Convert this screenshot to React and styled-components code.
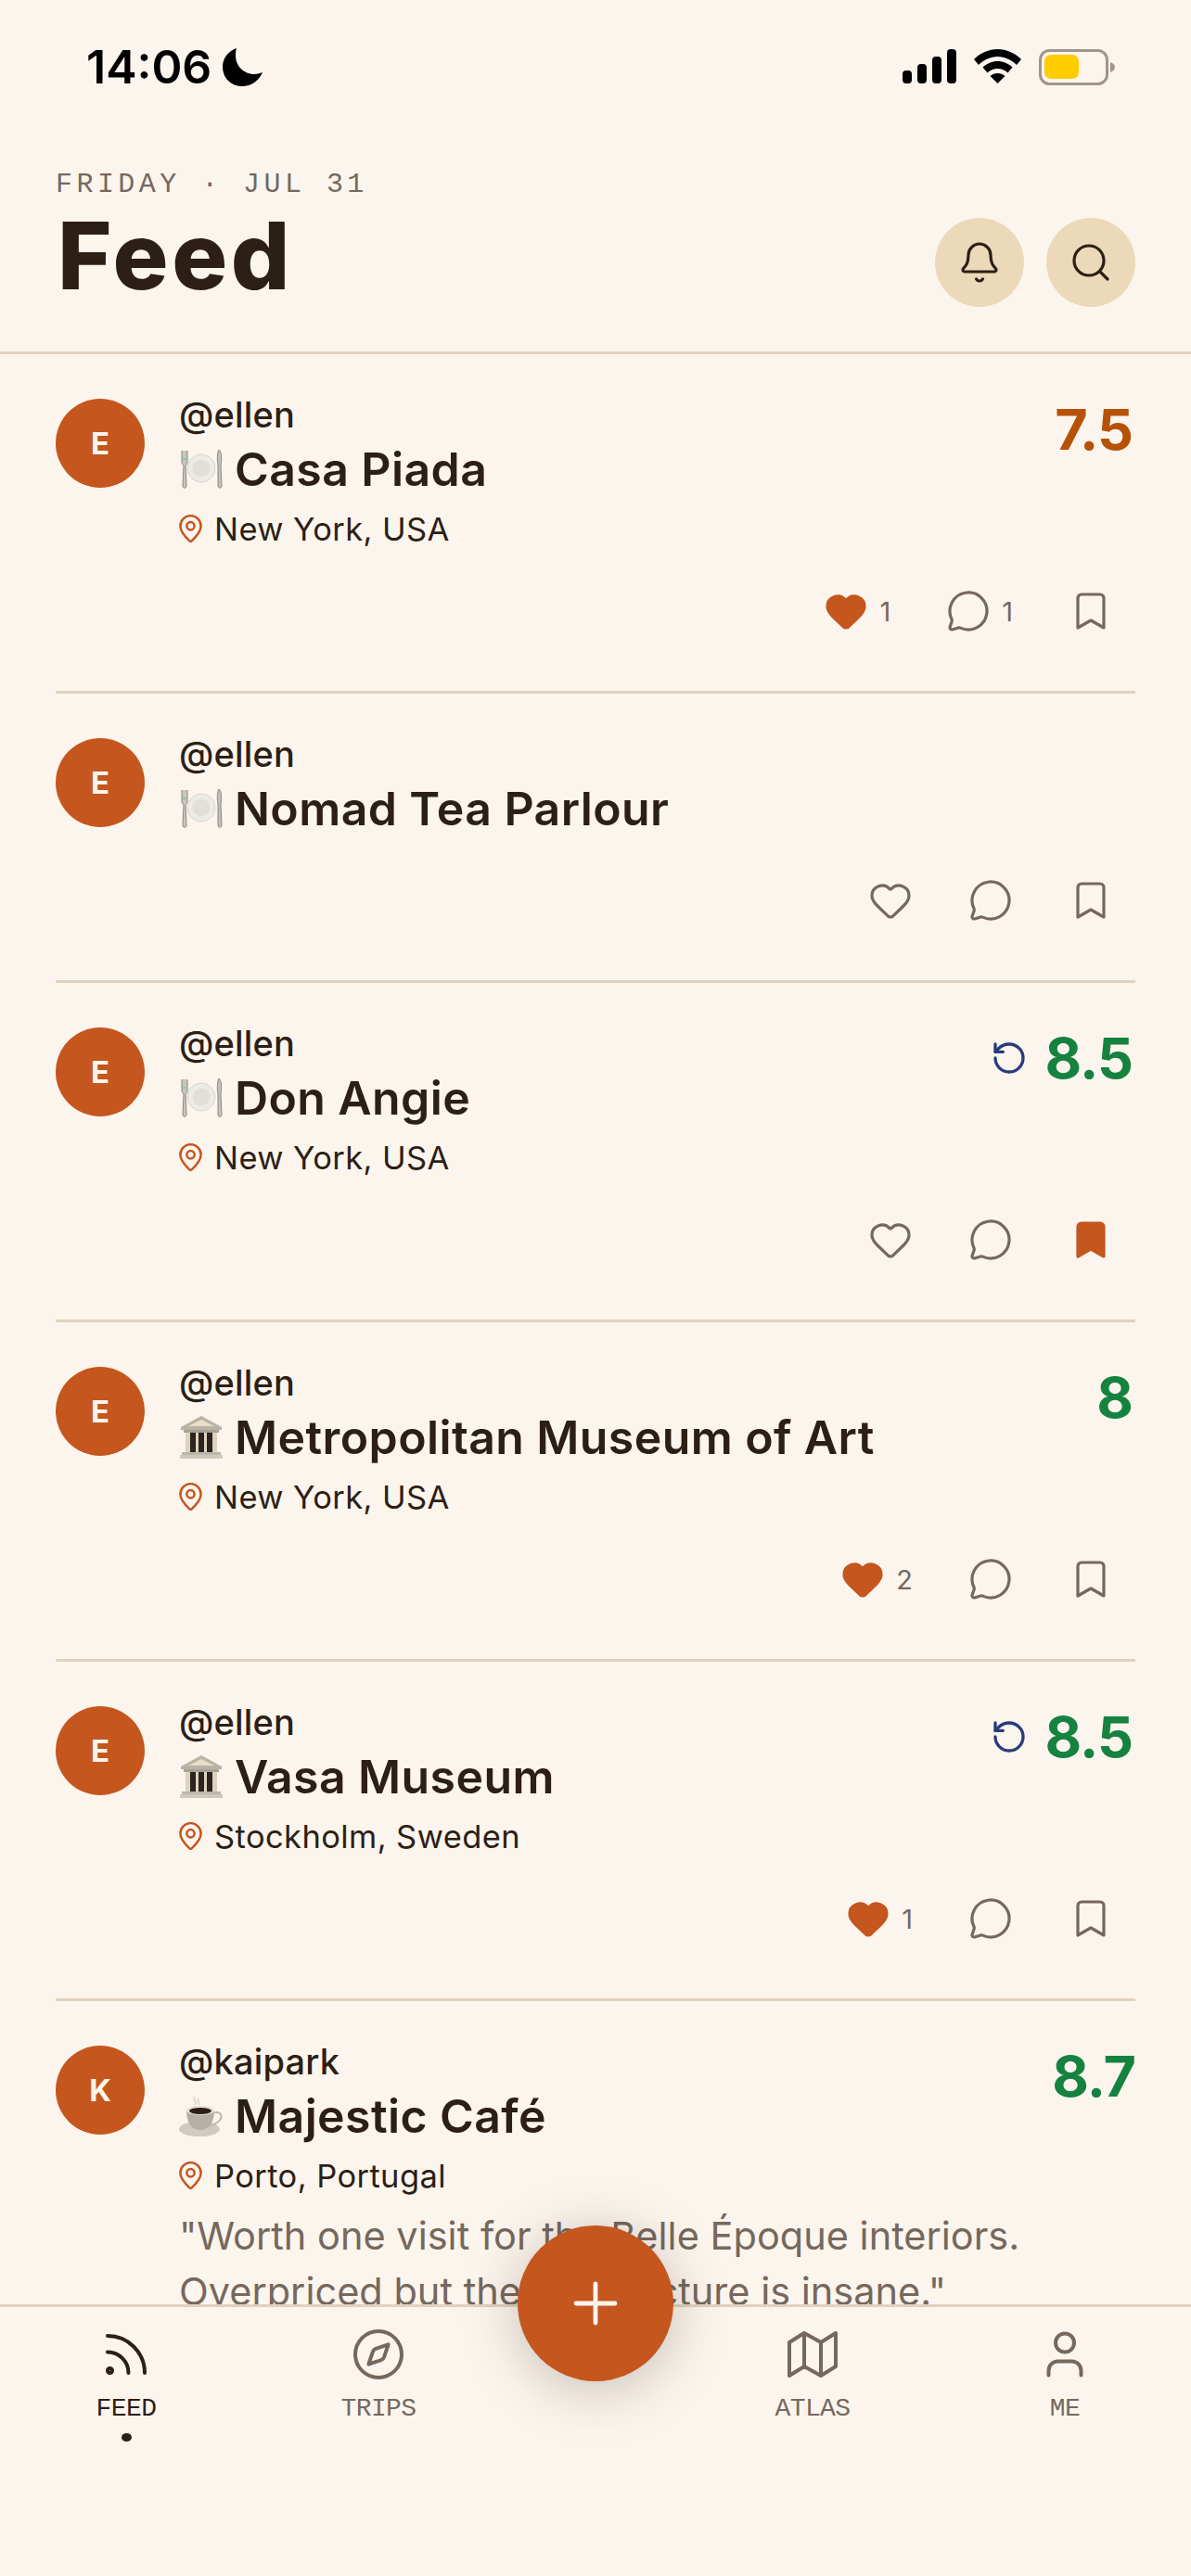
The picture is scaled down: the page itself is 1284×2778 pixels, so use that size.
import React from 'react'
import styled, { createGlobalStyle } from 'styled-components'
import { Bell, Search, Heart, MessageCircle, Bookmark, RotateCcw, Rss, Compass, User, Plus } from 'lucide-react'

const sans = '"Inter", "Liberation Sans", sans-serif'
const mono = '"Liberation Mono", "DejaVu Sans Mono", monospace'

const GlobalStyle = createGlobalStyle`
  html, body {
    margin: 0;
    padding: 0;
    background: #fcf5ee;
  }
  * {
    box-sizing: border-box;
  }
`

const Screen = styled.div`
  width: 1284px;
  height: 2778px;
  display: flex;
  flex-direction: column;
  overflow: hidden;
  background: #fcf5ee;
  color: #2c1f15;
  font-family: ${sans};
`

const StatusBar = styled.div`
  height: 130px;
  flex: none;
  padding: 46px 82px 0 93px;
  display: flex;
  justify-content: space-between;
  align-items: flex-start;
`

const Clock = styled.div`
  display: flex;
  align-items: center;
  gap: 12px;
  height: 52px;
  font-size: 50px;
  font-weight: 600;
  color: #000;
`

const StatusIcons = styled.div`
  display: flex;
  align-items: flex-start;
  gap: 19px;
  padding-top: 7px;
`

const Header = styled.header`
  flex: none;
  height: 252px;
  padding: 53px 60px 0;
  display: flex;
  justify-content: space-between;
  border-bottom: 3px solid #dfd3bd;
`

const DateLine = styled.div`
  font-family: ${mono};
  font-size: 30px;
  line-height: 32px;
  letter-spacing: 4.450px;
  color: #75685d;
`

const Title = styled.h1`
  margin: 9px 0 0 2px;
  font-size: 100px;
  line-height: 104px;
  font-weight: 800;
  letter-spacing: 3.500px;
  color: #2c1f15;
`

const HeaderButtons = styled.div`
  display: flex;
  gap: 24px;
  padding-top: 52px;
`

const RoundButton = styled.div`
  width: 96px;
  height: 96px;
  border-radius: 50%;
  background: #ecd9b9;
  display: flex;
  align-items: center;
  justify-content: center;
  color: #2c1f15;
`

const Feed = styled.main`
  flex: 1;
  min-height: 0;
  overflow: hidden;
  padding: 0 60px;
`

const Card = styled.article`
  padding: 48px 0 62px;
  border-bottom: 3px solid #dfd3bd;
`

const CardTop = styled.div`
  display: flex;
  gap: 37px;
  align-items: flex-start;
`

const Avatar = styled.div`
  flex: none;
  width: 96px;
  height: 96px;
  border-radius: 50%;
  background: #c5561d;
  color: #fcf5ee;
  display: flex;
  align-items: center;
  justify-content: center;
  font-size: 33px;
  font-weight: 700;
`

const Body = styled.div`
  flex: 1;
  min-width: 0;
`

const Handle = styled.div`
  margin-top: -5px;
  font-size: 38px;
  line-height: 44px;
  font-weight: 500;
  letter-spacing: 0.200px;
  color: #2c1f15;
`

const Place = styled.div`
  display: flex;
  align-items: center;
  gap: 12px;
  height: 58px;
  margin-top: 8px;
  white-space: nowrap;
  font-size: 50px;
  font-weight: 600;
  letter-spacing: 0.400px;
  color: #2c1f15;
`

const Location = styled.div`
  display: flex;
  align-items: center;
  gap: 13px;
  height: 54px;
  padding-top: 16px;
  font-size: 34.500px;
  letter-spacing: 0.400px;
  color: #2c1f15;
`

const Quote = styled.p`
  width: 960px;
  margin: 0;
  padding-top: 16px;
  font-size: 41.500px;
  line-height: 60px;
  color: #75685d;
`

const ScoreBox = styled.div`
  flex: none;
  display: flex;
  align-items: center;
  gap: 19px;
  height: 48px;
  padding-right: ${(p) => (p.$flush ? '0' : '3px')};
  margin-top: 9px;
  color: #283c7c;
`

const Score = styled.div`
  font-size: 61px;
  line-height: 48px;
  font-weight: 700;
  letter-spacing: -1px;
  color: ${(p) => p.$color};
`

const Actions = styled.div`
  display: flex;
  justify-content: flex-end;
  gap: 60px;
  margin-top: 46px;
  padding-right: 24px;
`

const Action = styled.div`
  display: flex;
  align-items: center;
  gap: 12px;
  height: 48px;
  color: #75685d;
`

const Count = styled.span`
  font-size: 29px;
  color: #75685d;
`

const TabBar = styled.nav`
  position: relative;
  flex: none;
  height: 293px;
  padding-top: 21px;
  display: grid;
  grid-template-columns: 272px 272px 196px 272px 272px;
  align-items: start;
  border-top: 3px solid #dfd3bd;
  background: #fcf5ee;
`

const Tab = styled.div`
  display: flex;
  flex-direction: column;
  align-items: center;
  height: 124px;
  color: ${(p) => (p.$active ? '#2c1f15' : '#75685d')};
`

const TabIcon = styled.div`
  height: 60px;
  display: flex;
  align-items: center;
  justify-content: center;
`

const TabLabel = styled.div`
  margin-top: 13px;
  font-family: ${mono};
  font-size: 28px;
  line-height: 32px;
  letter-spacing: -0.600px;
`

const TabDot = styled.div`
  width: 11px;
  height: 11px;
  margin-top: 10px;
  border-radius: 50%;
  background: #2c1f15;
`

const Fab = styled.div`
  position: absolute;
  top: -88px;
  left: 558px;
  width: 168px;
  height: 168px;
  border-radius: 50%;
  background: #c5561d;
  color: #fcf5ee;
  display: flex;
  align-items: center;
  justify-content: center;
  box-shadow: 0 8px 60px rgba(44, 31, 21, 0.26);
`

const PlateEmoji = () => (
  <svg width="48" height="44" viewBox="0 0 48 44">
    <path d="M3 2v12c0 2 1 3 2 4l-1 22c0 3 4 3 4 0L7 18c1-1 2-2 2-4V2" fill="#c9c6bf" stroke="#8c8880" strokeWidth="1" />
    <path d="M2.500 11h7" stroke="#8fc3a5" strokeWidth="2" />
    <circle cx="24" cy="21" r="15" fill="#ecebe6" stroke="#d8d6cf" strokeWidth="1" />
    <circle cx="24" cy="21" r="9.500" fill="#e0dfd9" />
    <path d="M43 1c3 2 3 10 2 17l1 22c0 3-4 3-4 0l0-22c-1-6-1-14 1-17z" fill="#c3c1ba" stroke="#8c8880" strokeWidth="1" />
  </svg>
)

const MuseumEmoji = () => (
  <svg width="48" height="50" viewBox="0 0 48 50">
    <path d="M24 2 46 14v3H2v-3z" fill="#b9b3a6" />
    <path d="M24 6 38 13H10z" fill="#e9dfc6" />
    <rect x="5" y="17" width="38" height="3" fill="#a7a195" />
    <rect x="7" y="20" width="34" height="21" fill="#ddd3bd" />
    <rect x="12" y="20" width="6" height="21" fill="#2b2420" />
    <rect x="21" y="20" width="6" height="21" fill="#2b2420" />
    <rect x="30" y="20" width="6" height="21" fill="#2b2420" />
    <rect x="3" y="41" width="42" height="3" fill="#bdb7aa" />
    <rect x="1" y="44" width="46" height="4" fill="#cfc9bc" />
  </svg>
)

const CoffeeEmoji = () => (
  <svg width="48" height="46" viewBox="0 0 48 46">
    <path d="M17 2c-3 3 3 5 0 9M21 4c-2 3 2 4 0 7" fill="none" stroke="#dfd9cf" strokeWidth="2" />
    <ellipse cx="22" cy="37" rx="22" ry="8" fill="#cfcbc3" />
    <path d="M8 17h30c0 12-5 21-15 21S8 29 8 17z" fill="#b5afa5" />
    <path d="M36 20c7-3 11 1 9 6-2 4-7 6-12 7" fill="none" stroke="#bdb8ae" strokeWidth="2" />
    <ellipse cx="23" cy="17" rx="15" ry="5" fill="#e3dfd7" />
    <ellipse cx="23" cy="17.500" rx="12" ry="3.500" fill="#2b1f18" />
  </svg>
)

const emojis = { food: PlateEmoji, museum: MuseumEmoji, coffee: CoffeeEmoji }

const Pin = () => (
  <svg width="25" height="30" viewBox="3 1.500 18 21" fill="none" stroke="#c5561d" strokeWidth="1.800" strokeLinecap="round" strokeLinejoin="round">
    <path d="M20 10c0 5-5.500 10-7.400 11.800a1 1 0 0 1-1.200 0C9.500 20 4 15 4 10a8 8 0 0 1 16 0" />
    <circle cx="12" cy="10" r="3" />
  </svg>
)

const Signal = () => (
  <svg width="58" height="37" viewBox="0 0 58 37" fill="#000">
    <rect x="0" y="23" width="10" height="14" rx="4" />
    <rect x="16" y="16" width="10" height="21" rx="4" />
    <rect x="32" y="8" width="10" height="29" rx="4" />
    <rect x="48" y="0" width="10" height="37" rx="4" />
  </svg>
)

const Wifi = () => (
  <svg width="51" height="37" viewBox="0 0 51 37" fill="#000">
    <path d="M25.500 0C35 0 44 4 51 11l-5 6c-5.500-5.500-13-9-20.500-9S10.500 11.500 5 17l-5-6C7 4 16 0 25.500 0z" />
    <path d="M25.500 13c6 0 11.500 2.500 16 6.500l-5 6c-3-3-7-4.500-11-4.500s-8 1.500-11 4.500l-5-6c4.500-4 10-6.500 16-6.500z" />
    <path d="M25.500 26c3 0 6 1 8 3l-8 8-8-8c2-2 5-3 8-3z" />
  </svg>
)

const Battery = () => (
  <svg width="82" height="39" viewBox="0 0 82 39">
    <rect x="1.500" y="1.500" width="72" height="36" rx="10" fill="none" stroke="#a0958a" strokeWidth="3" />
    <rect x="6" y="6" width="37" height="26" rx="7" fill="#ffcc00" />
    <path d="M77 14c3 1 5 3 5 5.500S80 24 77 25z" fill="#a0958a" />
  </svg>
)

const Moon = () => (
  <svg width="43" height="42" viewBox="0 0 43 42" fill="#000">
    <path d="M15 1C6 4 0 12 0 21c0 12 9 21 21 21 10 0 18-6 22-15-3 1-6 2-9 2C23 29 14 20 14 9c0-3 0-5 1-8z" />
  </svg>
)

const MapIcon = () => (
  <svg width="54" height="50" viewBox="0 0 54 50" fill="none" stroke="currentColor" strokeWidth="4" strokeLinejoin="round">
    <path d="M2 12 18 2l18 10L52 2v36L36 48 18 38 2 48z" />
    <path d="M18 2v36M36 12v36" />
  </svg>
)

const posts = [
  { id: 1, initial: 'E', handle: '@ellen', kind: 'food', place: 'Casa Piada', location: 'New York, USA', score: '7.5', color: '#b65206', likes: 1, liked: true, comments: 1 },
  { id: 2, initial: 'E', handle: '@ellen', kind: 'food', place: 'Nomad Tea Parlour' },
  { id: 3, initial: 'E', handle: '@ellen', kind: 'food', place: 'Don Angie', location: 'New York, USA', score: '8.5', color: '#16823f', revisit: true, saved: true },
  { id: 4, initial: 'E', handle: '@ellen', kind: 'museum', place: 'Metropolitan Museum of Art', location: 'New York, USA', score: '8', color: '#16823f', likes: 2, liked: true },
  { id: 5, initial: 'E', handle: '@ellen', kind: 'museum', place: 'Vasa Museum', location: 'Stockholm, Sweden', score: '8.5', color: '#16823f', revisit: true, likes: 1, liked: true },
  {
    id: 6,
    initial: 'K',
    handle: '@kaipark',
    kind: 'coffee',
    place: 'Majestic Café',
    location: 'Porto, Portugal',
    score: '8.7',
    color: '#16823f',
    flush: true,
    quote: '"Worth one visit for the Belle Époque interiors. Overpriced but the architecture is insane."',
  },
]

const PostCard = ({ post }) => {
  const Emoji = emojis[post.kind]
  return (
    <Card>
      <CardTop>
        <Avatar>{post.initial}</Avatar>
        <Body>
          <Handle>{post.handle}</Handle>
          <Place>
            <Emoji />
            {post.place}
          </Place>
          {post.location && (
            <Location>
              <Pin />
              {post.location}
            </Location>
          )}
          {post.quote && <Quote>{post.quote}</Quote>}
        </Body>
        {post.score && (
          <ScoreBox $flush={post.flush}>
            {post.revisit && <RotateCcw size={40} strokeWidth={2} />}
            <Score $color={post.color}>{post.score}</Score>
          </ScoreBox>
        )}
      </CardTop>
      {!post.quote && (
        <Actions>
          <Action>
            <Heart size={48} strokeWidth={1.6} color={post.liked ? '#c5561d' : '#75685d'} fill={post.liked ? '#c5561d' : 'none'} />
            {post.likes && <Count>{post.likes}</Count>}
          </Action>
          <Action>
            <MessageCircle size={48} strokeWidth={1.6} />
            {post.comments && <Count>{post.comments}</Count>}
          </Action>
          <Action>
            <Bookmark size={48} strokeWidth={1.6} color={post.saved ? '#c5561d' : '#75685d'} fill={post.saved ? '#c5561d' : 'none'} />
          </Action>
        </Actions>
      )}
    </Card>
  )
}

const App = () => (
  <>
    <GlobalStyle />
    <Screen>
      <StatusBar>
        <Clock>
          14:06
          <Moon />
        </Clock>
        <StatusIcons>
          <Signal />
          <Wifi />
          <Battery />
        </StatusIcons>
      </StatusBar>
      <Header>
        <div>
          <DateLine>FRIDAY · JUL 31</DateLine>
          <Title>Feed</Title>
        </div>
        <HeaderButtons>
          <RoundButton>
            <Bell size={48} strokeWidth={1.6} />
          </RoundButton>
          <RoundButton>
            <Search size={48} strokeWidth={1.6} />
          </RoundButton>
        </HeaderButtons>
      </Header>
      <Feed>
        {posts.map((post) => (
          <PostCard key={post.id} post={post} />
        ))}
      </Feed>
      <TabBar>
        <Tab $active>
          <TabIcon>
            <Rss size={60} strokeWidth={1.6} />
          </TabIcon>
          <TabLabel>FEED</TabLabel>
          <TabDot />
        </Tab>
        <Tab>
          <TabIcon>
            <Compass size={60} strokeWidth={1.6} />
          </TabIcon>
          <TabLabel>TRIPS</TabLabel>
        </Tab>
        <div />
        <Tab>
          <TabIcon>
            <MapIcon />
          </TabIcon>
          <TabLabel>ATLAS</TabLabel>
        </Tab>
        <Tab>
          <TabIcon>
            <User size={60} strokeWidth={1.6} />
          </TabIcon>
          <TabLabel>ME</TabLabel>
        </Tab>
        <Fab>
          <Plus size={72} strokeWidth={1.6} />
        </Fab>
      </TabBar>
    </Screen>
  </>
)

export default App
